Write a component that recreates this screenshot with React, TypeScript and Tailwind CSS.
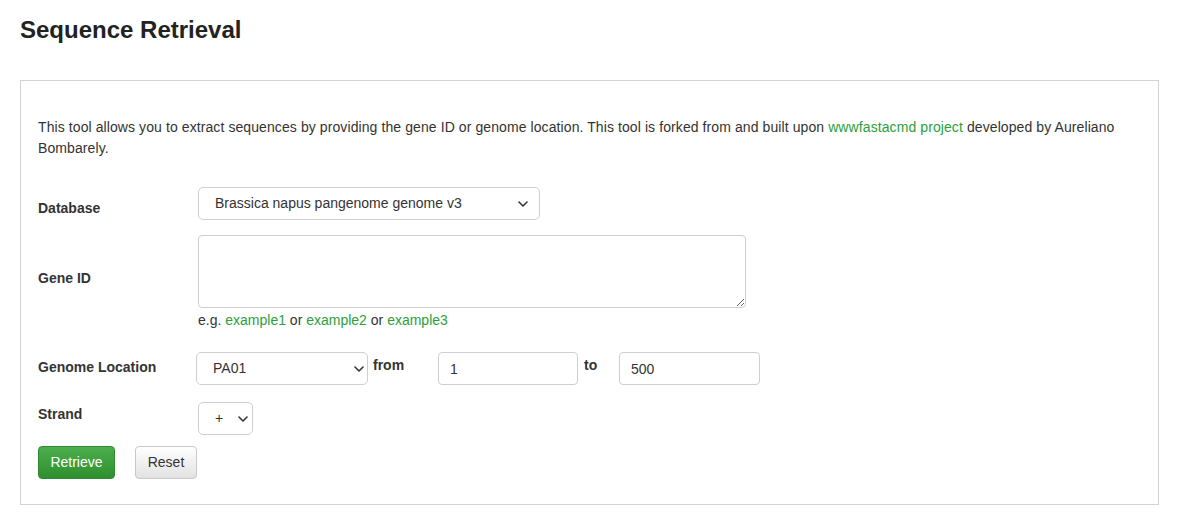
import React from 'react'

function Chevron({ className }: { className: string }) {
  return (
    <svg
      className={className}
      width="10"
      height="6"
      viewBox="0 0 10 6"
      fill="none"
      stroke="#333"
      strokeWidth="1.6"
      strokeLinecap="round"
      strokeLinejoin="round"
    >
      <path d="M1 1l4 4 4-4" />
    </svg>
  )
}

function Select({
  value,
  width,
  textPad,
  chevronRight,
}: {
  value: string
  width: string
  textPad: string
  chevronRight: string
}) {
  return (
    <div className={`relative ${width} h-[33px]`}>
      <select
        defaultValue={value}
        className={`h-full w-full appearance-none rounded-[5px] border border-[#cfcfcf] bg-white ${textPad} text-[14px] text-[#333] outline-none`}
      >
        <option>{value}</option>
      </select>
      <Chevron className={`pointer-events-none absolute top-[14px] ${chevronRight}`} />
    </div>
  )
}

export default function App() {
  return (
    <div
      className="min-h-[522px] bg-white px-[20px] pt-[14px] text-[14px] text-[#333]"
      style={{ fontFamily: '"Liberation Sans", Arial, sans-serif' }}
    >
      <h1 className="text-[24px] font-bold leading-[32px] text-[#222]">Sequence Retrieval</h1>

      <div className="mt-[34px] w-[1139px] border border-[#d2d2d2] px-[17px] pt-[36px] pb-[25px]">
        <p className="leading-[21px] tracking-[0.09px]">
          This tool allows you to extract sequences by providing the gene ID or genome location. This tool is
          forked from and built upon{' '}
          <a href="#" className="text-[#2ca03c]">
            wwwfastacmd project
          </a>{' '}
          developed by Aureliano Bombarely.
        </p>

        {/* Database */}
        <div className="mt-[28px] flex">
          <div className="w-[160px] pt-[11px] font-bold leading-[20px]">Database</div>
          <Select
            value="Brassica napus pangenome genome v3"
            width="w-[342px]"
            textPad="pl-[16px] h-[32px]"
            chevronRight="right-[12px]"
          />
        </div>

        {/* Gene ID */}
        <div className="mt-[15px] flex">
          <div className="w-[160px] pt-[33px] font-bold leading-[20px]">Gene ID</div>
          <div className="flex flex-col">
            <textarea className="h-[73px] w-[548px] rounded-[4px] border border-[#cfcfcf] bg-white outline-none" />
            <div className="mt-[2px] leading-[20px]">
              e.g.{' '}
              <a href="#" className="text-[#2ca03c]">
                example1
              </a>{' '}
              or{' '}
              <a href="#" className="text-[#2ca03c]">
                example2
              </a>{' '}
              or{' '}
              <a href="#" className="text-[#2ca03c]">
                example3
              </a>
            </div>
          </div>
        </div>

        {/* Genome Location */}
        <div className="mt-[22px] flex">
          <div className="w-[158px] pt-[5px] font-bold leading-[20px]">Genome Location</div>
          <Select value="PA01" width="w-[172px]" textPad="pl-[16px]" chevronRight="right-[4px]" />
          <div className="ml-[5px] w-[65px] pt-[3px] font-bold leading-[20px]">from</div>
          <input
            defaultValue="1"
            className="h-[33px] w-[140px] rounded-[4px] border border-[#cfcfcf] px-[11px] text-[14px] text-[#333] outline-none"
          />
          <div className="ml-[6px] w-[35px] pt-[3px] font-bold leading-[20px]">to</div>
          <input
            defaultValue="500"
            className="h-[33px] w-[141px] rounded-[4px] border border-[#cfcfcf] px-[11px] text-[14px] text-[#333] outline-none"
          />
        </div>

        {/* Strand */}
        <div className="mt-[17px] flex">
          <div className="w-[160px] pt-[2px] font-bold leading-[20px]">Strand</div>
          <Select value="+" width="w-[55px]" textPad="pl-[16px]" chevronRight="right-[5px]" />
        </div>

        <div className="mt-[11px] flex gap-[20px]">
          <button className="h-[33px] w-[77px] rounded-[4px] border border-[#2f8a2f] bg-gradient-to-b from-[#4cae4c] to-[#2f8f2f] text-[14px] text-white">
            Retrieve
          </button>
          <button className="h-[33px] w-[62px] rounded-[4px] border border-[#c8c8c8] bg-gradient-to-b from-white to-[#e2e2e2] text-[14px] text-[#333]">
            Reset
          </button>
        </div>
      </div>
    </div>
  )
}
